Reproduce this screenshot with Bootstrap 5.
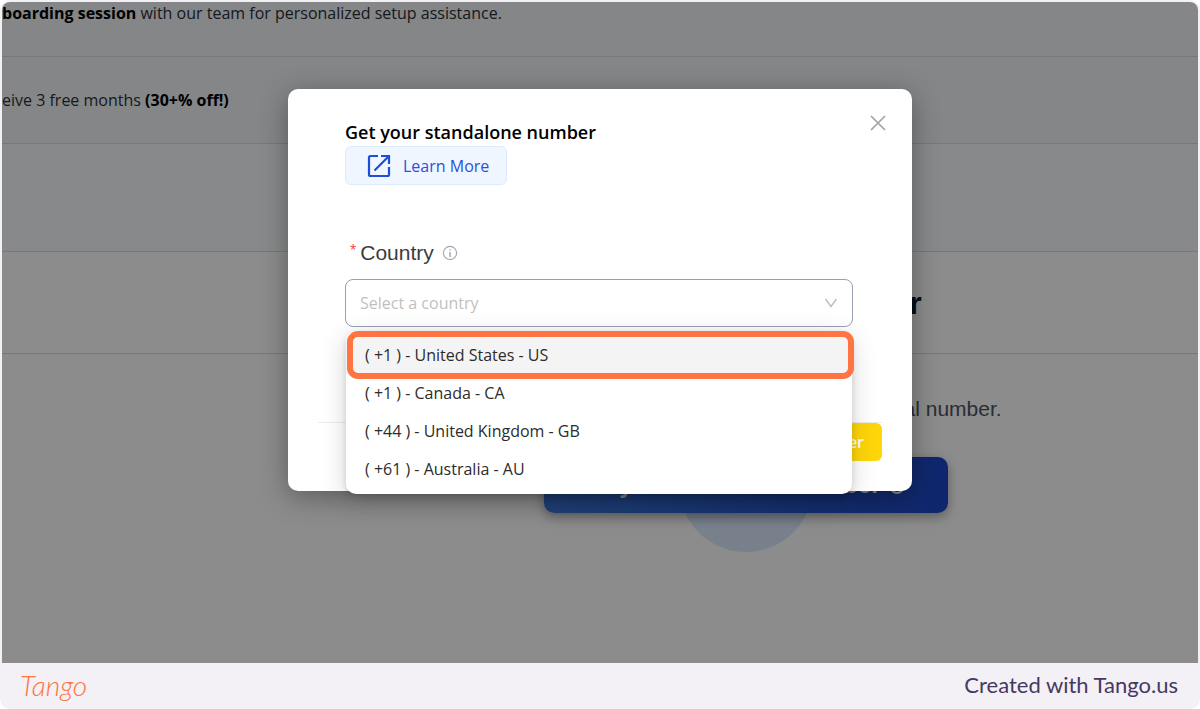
<!DOCTYPE html>
<html lang="en">
<head>
<meta charset="utf-8">
<meta name="viewport" content="width=device-width, initial-scale=1">
<title>Get your standalone number</title>
<link href="https://cdn.jsdelivr.net/npm/bootstrap@5.3.0/dist/css/bootstrap.min.css" rel="stylesheet">
<style>
  body { font-family: "Open Sans", "Noto Sans", sans-serif; background: #fff; color: #212121; }
  .frame { background: #f3f0f6; border-radius: 10px; padding: 2px 2px 0; }
  .stage { border-radius: 8px 8px 0 0; background: #fff; }
  .arimo { font-family: "Liberation Sans", Arial, sans-serif; }

  /* page under the dialog */
  .band { border-bottom: 1px solid #d8dbea; white-space: nowrap; font-size: 16px; line-height: 24px; color: #2b2f33; background: #f0f5f8; }
  .band b { color: #000; }
  .band-first { height: 55px; line-height: 22px; }
  .band-promo { height: 87px; }
  .band-blank { height: 108px; background: #f8fafb; }
  .band-title { height: 102px; background: #fff; padding-left: 292px; }
  .band-title h1 { font-size: 32px; line-height: 40px; font-weight: 700; color: #0f172a; }
  .hero { padding: 40px 0 0 292px; }
  .hero p { font-size: 21px; line-height: 30px; color: #4b5563; margin-bottom: 33px; }
  .cta { width: 404px; height: 56px; border: 0; border-radius: 10px; font-size: 24px; line-height: 28px; font-weight: 700; color: #fff; padding: 0;
         background: linear-gradient(90deg, #3b78dc, #1c46c8); box-shadow: 0 4px 12px rgba(0,0,0,.35); }
  .halo { width: 134px; height: 134px; background: #dbeafe; top: 50%; left: 50%; }

  .shade { background: rgba(0,0,0,.45); }

  /* dialog */
  .dialog { width: 624px; min-height: 402px; margin-top: 87px; border-radius: 10px; padding: 30px; background: #fff; box-shadow: 0 6px 28px rgba(0,0,0,.35); }
  .dialog-body { padding: 0 29px 0 27px; }
  .dialog h2 { font-size: 18px; line-height: 27px; font-weight: 600; color: #000; }
  .close-x { top: 24px; right: 24px; width: 20px; height: 20px; color: #a3a3a3; }
  .learn { width: 162px; height: 39px; border: 1px solid #dbeafe; border-radius: 6px; background: #eff6ff; color: #2c50dc; font-size: 16px; gap: 12px; padding-left: 21px; }
  .field { margin-top: 52px; }
  .caption { margin-bottom: 10px; padding-left: 5px; }
  .field label { font-size: 21px; line-height: 32px; color: #3b3b3b; }
  .star { color: #ff4d4f; font-size: 16px; line-height: 28px; }
  .picker { height: 48px; border: 1px solid #99a0b4; border-radius: 8px; font-size: 16px; color: #bfbfbf; padding: 0 14px; background-size: 14px 14px; background-position: right 14px center;
            background-image: url("data:image/svg+xml,%3Csvg xmlns='http://www.w3.org/2000/svg' viewBox='0 0 14 14'%3E%3Cpath d='M1.5 3L7 10.500L12.500 3' fill='none' stroke='%23bdbdbd' stroke-width='1.400'/%3E%3C/svg%3E"); }
  .menu { top: 100%; left: 1px; right: 1px; margin-top: 4px; padding: 5px 0 6px; border-radius: 10px; background: #fff; box-shadow: 0 6px 26px rgba(0,0,0,.17), 0 2px 6px rgba(0,0,0,.12); z-index: 3; }
  .menu button { height: 38px; border: 0; background: none; padding: 0 19px; font-size: 16px; color: #2c2c2c; white-space: pre; }
  .menu button.picked { background: #f4f4f4; }
  .ring { top: 0; left: 1px; right: -2px; height: 48px; border: 6px solid #ff7442; border-radius: 11px; pointer-events: none; }
  .actions { border-top: 1px solid #ececec; margin-top: 95px; }
  .buy { height: 38px; border: 0; border-radius: 6px; background: #ffd60a; color: #fff; font-size: 16px; font-weight: 600; padding: 0 18px; }

  /* credit strip */
  .credit { height: 46px; padding: 0 20px 2px 18px; }
  .wordmark { font-family: Lato, sans-serif; font-weight: 300; font-style: italic; font-size: 28px; line-height: 40px; color: #ff7442; }
  .made { font-family: Lato, sans-serif; font-size: 22px; line-height: 28px; color: #463960; }
</style>
</head>
<body>
<div class="frame d-flex flex-column min-vh-100">
  <main class="stage position-relative flex-grow-1 overflow-hidden">
    <div class="band band-first"><b>boarding session</b> with our team for personalized setup assistance.</div>
    <div class="band band-promo d-flex align-items-center"><span>eive 3 free months <b>(30+% off!)</b></span></div>
    <div class="band band-blank"></div>
    <div class="band band-title arimo d-flex align-items-center justify-content-center"><h1 class="m-0">Your Business Number</h1></div>
    <section class="hero arimo text-center">
      <p>Reach your customers using a dedicated local number.</p>
      <div class="position-relative d-inline-block">
        <span class="halo position-absolute translate-middle rounded-circle"></span>
        <button class="cta position-relative d-flex align-items-center justify-content-center gap-2" type="button">Buy a standalone number
          <svg width="16" height="20" viewBox="0 0 16 20" fill="none" stroke="currentColor" stroke-width="2"><circle cx="8" cy="12" r="6"/></svg>
        </button>
      </div>
    </section>

    <div class="shade position-absolute top-0 start-0 w-100 h-100 d-flex justify-content-center align-items-start">
      <div class="dialog position-relative" role="dialog" aria-labelledby="dlg-title">
        <button class="close-x position-absolute border-0 bg-transparent p-0 d-flex" type="button" aria-label="Close">
          <svg width="20" height="20" viewBox="0 0 20 20" fill="none" stroke="currentColor" stroke-width="1.700"><path d="M3 3L17 17M17 3L3 17"/></svg>
        </button>
        <div class="dialog-body">
          <h2 class="m-0" id="dlg-title">Get your standalone number</h2>
          <a class="learn d-flex align-items-center text-decoration-none" href="#">
            <svg width="24" height="24" viewBox="0 0 24 24" fill="none" stroke="#1d4ed8" stroke-width="2.200"><path d="M11 2H3.500Q2 2 2 3.500V20.500Q2 22 3.500 22H20.500Q22 22 22 20.500V13M14 2H22V10M22 2L7.500 16.500"/></svg>
            Learn More
          </a>
          <div class="field">
            <div class="caption d-flex align-items-center arimo">
              <span class="star align-self-start me-1">*</span>
              <label for="country">Country</label>
              <svg class="ms-2" width="16" height="16" viewBox="0 0 16 16" fill="none" stroke="#a3a8b4" stroke-width="1.200"><circle cx="8" cy="8" r="6.600"/><path d="M8 7V12M8 4.200V5.600" stroke-width="1.500"/></svg>
            </div>
            <div class="position-relative">
              <select class="picker form-select" id="country"><option>Select a country</option></select>
              <div class="menu position-absolute d-flex flex-column">
                <button class="picked text-start" type="button">( +1 ) - United States - US</button>
                <button class="text-start" type="button">( +1 ) - Canada - CA</button>
                <button class="text-start" type="button">( +44 ) - United Kingdom - GB</button>
                <button class="text-start" type="button">( +61 ) - Australia - AU</button>
                <span class="ring position-absolute"></span>
              </div>
            </div>
          </div>
        </div>
        <div class="actions d-flex justify-content-end"><button class="buy" type="button">Get Number</button></div>
      </div>
    </div>
  </main>
  <footer class="credit d-flex align-items-center justify-content-between">
    <span class="wordmark">Tango</span>
    <span class="made">Created with Tango.us</span>
  </footer>
</div>
<script src="https://cdn.jsdelivr.net/npm/bootstrap@5.3.0/dist/js/bootstrap.bundle.min.js"></script>
</body>
</html>
